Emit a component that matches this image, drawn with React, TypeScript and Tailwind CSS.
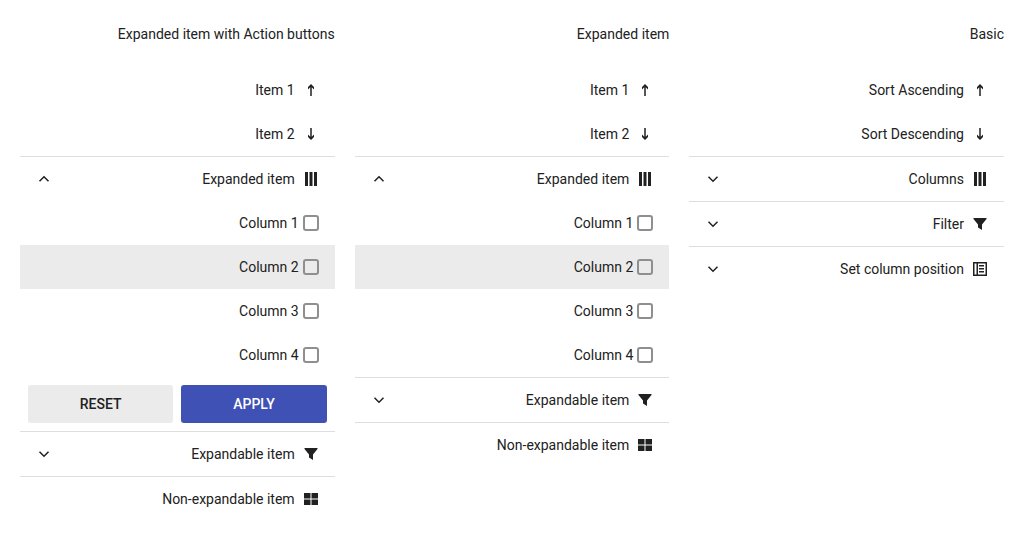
import type { ReactNode } from "react";

type IconName = "up" | "down" | "columns" | "filter" | "grid" | "position";

const paths: Record<IconName, ReactNode> = {
  up: <path d="M7.25 14V5.2L5 7.4V5L8 2l3 3v2.4L8.75 5.2V14z" />,
  down: <path d="M7.25 2v8.8L5 8.6V11l3 3 3-3V8.600L8.750 10.800V2z" />,
  columns: <path d="M2 1h3v14H2zM6.500 1h3v14h-3zM11 1h3v14h-3z" />,
  filter: <path d="M1.500 2h13v1L10 8.500V14l-4-2.500v-3L1.500 3z" />,
  grid: <path d="M1 2h6.500v5.500H1zM8.500 2H15v5.500H8.500zM1 8.500h6.500V14H1zM8.500 8.500H15V14H8.500z" />,
  position: <path fillRule="evenodd" d="M1 1h14v14H1zM2.500 2.500v11h2v-11zM6 2.500v11h7.500v-11zM7 4h5v1.500H7zM7 7h5v1.500H7zM7 10h5v1.500H7z" />,
};

function Icon({ name }: { name: IconName }) {
  return <svg viewBox="0 0 16 16" className="size-4 shrink-0 fill-[#212121]">{paths[name]}</svg>;
}

function Chevron({ open }: { open: boolean }) {
  return (
    <svg viewBox="0 0 16 16" className="size-4 fill-none stroke-[#212121] stroke-[1.5]">
      <path d={open ? "M3.500 10.250 8 5.750l4.500 4.500" : "M3.500 5.750 8 10.250l4.500-4.500"} />
    </svg>
  );
}

function Item({ text, icon, expander }: { text: string; icon: IconName; expander?: "open" | "closed" }) {
  return (
    <div className="flex h-11 items-center justify-between px-4">
      <span className="flex w-4 shrink-0">{expander && <Chevron open={expander === "open"} />}</span>
      <div className="flex items-center gap-2"><span>{text}</span><Icon name={icon} /></div>
    </div>
  );
}

function Section({ children }: { children: ReactNode }) {
  return <div className="border-t border-[#dedede]">{children}</div>;
}

function ColumnList() {
  return (
    <>
      {[1, 2, 3, 4].map((n) => (
        <label key={n} className={n === 2 ? "flex h-11 items-center justify-end gap-1 bg-[#ebebeb] px-4" : "flex h-11 items-center justify-end gap-1 px-4"}>
          <span>Column {n}</span>
          <span className="size-4 rounded-[3px] border-2 border-[#8f8f8f]" />
        </label>
      ))}
    </>
  );
}

function Menu({ title, children }: { title: string; children: ReactNode }) {
  return (
    <section className="min-w-0">
      <h2 className="mb-[34px] h-[34px] pt-6 text-right leading-5">{title}</h2>
      {children}
    </section>
  );
}

export default function App() {
  return (
    <main className="grid h-[541px] grid-cols-3 gap-5 bg-white px-5 font-['Roboto',sans-serif] text-sm leading-5 text-[#212121]">
      <Menu title="Expanded item with Action buttons">
        <Item text="Item 1" icon="up" />
        <Item text="Item 2" icon="down" />
        <Section>
          <Item text="Expanded item" icon="columns" expander="open" />
          <ColumnList />
          <div className="grid grid-cols-2 gap-2 p-2 font-medium">
            <button className="h-[38px] rounded-[3px] bg-[#ebebeb]">RESET</button>
            <button className="h-[38px] rounded-[3px] bg-[#3f51b5] text-white">APPLY</button>
          </div>
        </Section>
        <Section><Item text="Expandable item" icon="filter" expander="closed" /></Section>
        <Section><Item text="Non-expandable item" icon="grid" /></Section>
      </Menu>
      <Menu title="Expanded item">
        <Item text="Item 1" icon="up" />
        <Item text="Item 2" icon="down" />
        <Section>
          <Item text="Expanded item" icon="columns" expander="open" />
          <ColumnList />
        </Section>
        <Section><Item text="Expandable item" icon="filter" expander="closed" /></Section>
        <Section><Item text="Non-expandable item" icon="grid" /></Section>
      </Menu>
      <Menu title="Basic">
        <Item text="Sort Ascending" icon="up" />
        <Item text="Sort Descending" icon="down" />
        <Section><Item text="Columns" icon="columns" expander="closed" /></Section>
        <Section><Item text="Filter" icon="filter" expander="closed" /></Section>
        <Section><Item text="Set column position" icon="position" expander="closed" /></Section>
      </Menu>
    </main>
  );
}
